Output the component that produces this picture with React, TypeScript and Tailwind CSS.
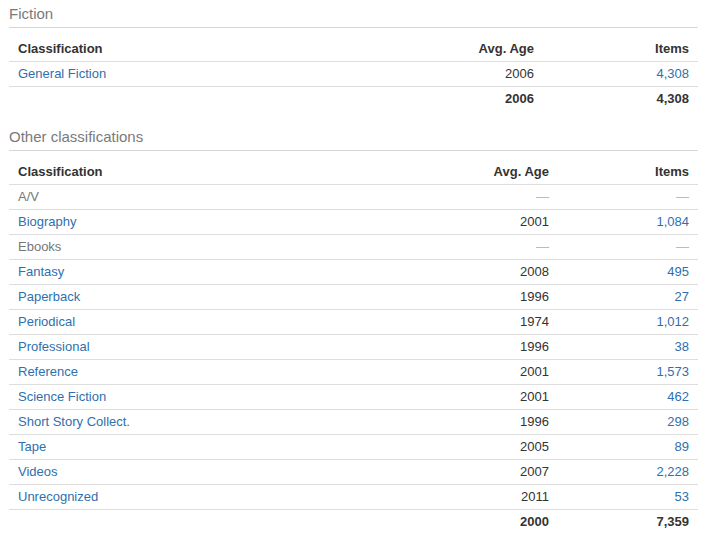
import React from "react";

type Row = { name: string; age: string; items: string; muted?: boolean };

const fiction: Row[] = [{ name: "General Fiction", age: "2006", items: "4,308" }];

const other: Row[] = [
  { name: "A/V", age: "—", items: "—", muted: true },
  { name: "Biography", age: "2001", items: "1,084" },
  { name: "Ebooks", age: "—", items: "—", muted: true },
  { name: "Fantasy", age: "2008", items: "495" },
  { name: "Paperback", age: "1996", items: "27" },
  { name: "Periodical", age: "1974", items: "1,012" },
  { name: "Professional", age: "1996", items: "38" },
  { name: "Reference", age: "2001", items: "1,573" },
  { name: "Science Fiction", age: "2001", items: "462" },
  { name: "Short Story Collect.", age: "1996", items: "298" },
  { name: "Tape", age: "2005", items: "89" },
  { name: "Videos", age: "2007", items: "2,228" },
  { name: "Unrecognized", age: "2011", items: "53" },
];

function Section({
  title,
  rows,
  total,
  itemsW,
}: {
  title: string;
  rows: Row[];
  total: { age: string; items: string };
  itemsW: string;
}) {
  const itemsCls = itemsW === "155" ? "w-[155px]" : "w-[140px]";
  return (
    <div>
      <div className="pt-[4px] pb-[3px] border-b border-[#d6d6d6] text-[15px] leading-[20px] text-[#7a7a7a]">
        {title}
      </div>
      <div className="mt-[9px]">
        <div className="flex h-[25px] items-center pb-[2px] border-b border-[#dddddd] font-bold text-[#333333]">
          <div className="flex-1 px-[9px]">Classification</div>
          <div className="w-[120px] px-[9px] text-right">Avg. Age</div>
          <div className={`${itemsCls} px-[9px] text-right`}>Items</div>
        </div>
        {rows.map((r) => (
          <div key={r.name} className="flex h-[25px] items-center pb-[2px] border-b border-[#dddddd]">
            <div className={`flex-1 px-[9px] ${r.muted ? "text-[#777777]" : "text-[#2f6fae]"}`}>{r.name}</div>
            <div className={`w-[120px] px-[9px] text-right ${r.muted ? "text-[#bbbbbb]" : "text-[#333333]"}`}>{r.age}</div>
            <div className={`${itemsCls} px-[9px] text-right ${r.muted ? "text-[#bbbbbb]" : "text-[#2f6fae]"}`}>{r.items}</div>
          </div>
        ))}
        <div className="flex h-[25px] items-center pb-[2px] font-bold text-[#333333]">
          <div className="flex-1 px-[9px]"></div>
          <div className="w-[120px] px-[9px] text-right">{total.age}</div>
          <div className={`${itemsCls} px-[9px] text-right`}>{total.items}</div>
        </div>
      </div>
    </div>
  );
}

export default function App() {
  return (
    <div
      className="w-[710px] h-[546px] bg-white pl-[9px] pr-[12px] text-[13px] leading-[15px]"
      style={{ fontFamily: '"Liberation Sans", Arial, sans-serif' }}
    >
      <Section title="Fiction" rows={fiction} total={{ age: "2006", items: "4,308" }} itemsW="155" />
      <div className="h-[11px]" />
      <Section title="Other classifications" rows={other} total={{ age: "2000", items: "7,359" }} itemsW="140" />
    </div>
  );
}
